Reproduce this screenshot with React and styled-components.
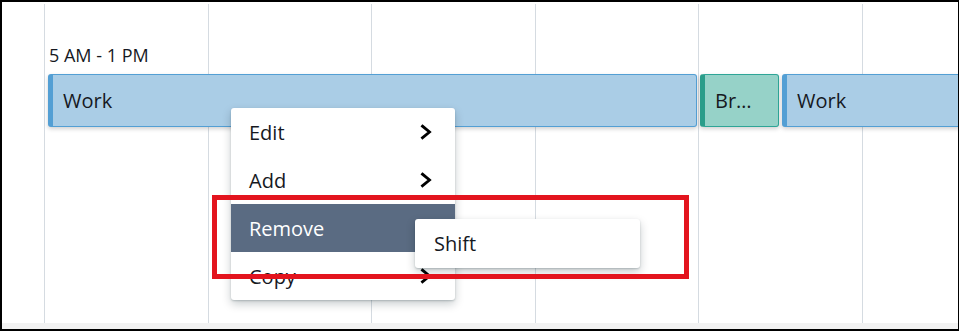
import styled, { createGlobalStyle } from "styled-components";

const GlobalStyle = createGlobalStyle`
    html, body {
        margin: 0;
        padding: 0;
        background: #ffffff;
    }
    body {
        font-family: "Open Sans", "Noto Sans", Arial, sans-serif;
        color: #16191f;
    }
`;

const Frame = styled.div`
    position: relative;
    box-sizing: border-box;
    width: 959px;
    height: 331px;
    border: 2px solid #000000;
    border-right-width: 1px;
    display: flex;
    flex-direction: column;
    overflow: hidden;
    background: #ffffff;
`;

const Canvas = styled.div`
    flex: 1;
    margin-top: 2px;
    display: grid;
    grid-template-columns: 42px repeat(5, 163.6px) 1fr;
    grid-template-rows: 1fr;
    min-height: 0;
`;

const Column = styled.div`
    grid-row: 1;
    grid-column: ${(p) => p.$col};
    border-left: ${(p) => (p.$col > 1 ? "1px solid #d5dbe1" : "none")};
`;

const Lane = styled.div`
    grid-row: 1;
    grid-column: 1 / -1;
    z-index: 1;
    min-width: 0;
    overflow: hidden;
    padding: 40px 0 0 46px;
    display: flex;
    flex-direction: column;
`;

const TimeLabel = styled.div`
    font-size: 18px;
    line-height: 22px;
    color: #16191f;
    margin-bottom: 8px;
    margin-left: 1px;
`;

const BarRow = styled.div`
    display: flex;
    gap: 3px;
    height: 53px;
`;

const Bar = styled.div`
    box-sizing: border-box;
    flex: none;
    width: ${(p) => p.$width}px;
    height: 53px;
    display: flex;
    align-items: center;
    padding-left: 10px;
    background: ${(p) => (p.$kind === "break" ? "#96d2c8" : "#aacde6")};
    border: 1px solid ${(p) => (p.$kind === "break" ? "#2ea597" : "#539fd4")};
    border-left: 5px solid ${(p) => (p.$kind === "break" ? "#2a9d8a" : "#539fd4")};
    border-radius: 3px;
    box-shadow: 0 2px 4px rgba(0, 0, 0, 0.18);
    font-size: 20px;
    color: #16191f;
    white-space: nowrap;
    overflow: hidden;
`;

const Strip = styled.div`
    height: 6px;
    background: #f2f2f2;
`;

const Menu = styled.ul`
    position: absolute;
    left: ${(p) => p.$left}px;
    top: ${(p) => p.$top}px;
    width: ${(p) => p.$width}px;
    margin: 0;
    padding: 0;
    list-style: none;
    background: #ffffff;
    border-radius: 3px;
    box-shadow: 0 1px 2px rgba(0, 28, 36, 0.2), 0 4px 10px rgba(0, 28, 36, 0.22);
    z-index: ${(p) => p.$layer};
`;

const MenuItem = styled.li`
    box-sizing: border-box;
    height: ${(p) => p.$height || 48}px;
    display: flex;
    align-items: center;
    justify-content: space-between;
    padding: 0 22px 0 ${(p) => p.$indent || 18}px;
    font-size: 20px;
    background: ${(p) => (p.$active ? "#5a6b82" : "transparent")};
    color: ${(p) => (p.$active ? "#ffffff" : "#16191f")};
`;

const Highlight = styled.div`
    position: absolute;
    left: 210px;
    top: 193px;
    width: 477px;
    height: 84px;
    box-sizing: border-box;
    border: 5px solid #e3141e;
    z-index: 5;
    pointer-events: none;
`;

function Chevron({ color }) {
    return (
        <svg width="14" height="16" viewBox="0 0 14 16" fill="none">
            <path
                d="M3.5 2.2 L10.5 8 L3.5 13.8"
                stroke={color}
                strokeWidth="2.8"
                strokeLinecap="square"
                strokeLinejoin="miter"
            />
        </svg>
    );
}

const menuItems = [
    { label: "Edit" },
    { label: "Add" },
    { label: "Remove", active: true },
    { label: "Copy" },
];

const columns = [1, 2, 3, 4, 5, 6, 7];

export default function App() {
    return (
        <>
            <GlobalStyle />
            <Frame>
                <Canvas>
                    {columns.map((col) => (
                        <Column key={col} $col={col} />
                    ))}
                    <Lane>
                        <TimeLabel>5 AM - 1 PM</TimeLabel>
                        <BarRow>
                            <Bar $width={649}>Work</Bar>
                            <Bar $width={79} $kind="break">Br…</Bar>
                            <Bar $width={300}>Work</Bar>
                        </BarRow>
                    </Lane>
                </Canvas>
                <Strip />

                <Menu $left={229} $top={106} $width={224} $layer={2}>
                    {menuItems.map((item) => (
                        <MenuItem key={item.label} $active={item.active}>
                            {item.label}
                            <Chevron color={item.active ? "#ffffff" : "#000000"} />
                        </MenuItem>
                    ))}
                </Menu>

                <Menu $left={413} $top={217} $width={225} $layer={3}>
                    <MenuItem $height={49} $indent={19}>Shift</MenuItem>
                </Menu>

                <Highlight />
            </Frame>
        </>
    );
}
